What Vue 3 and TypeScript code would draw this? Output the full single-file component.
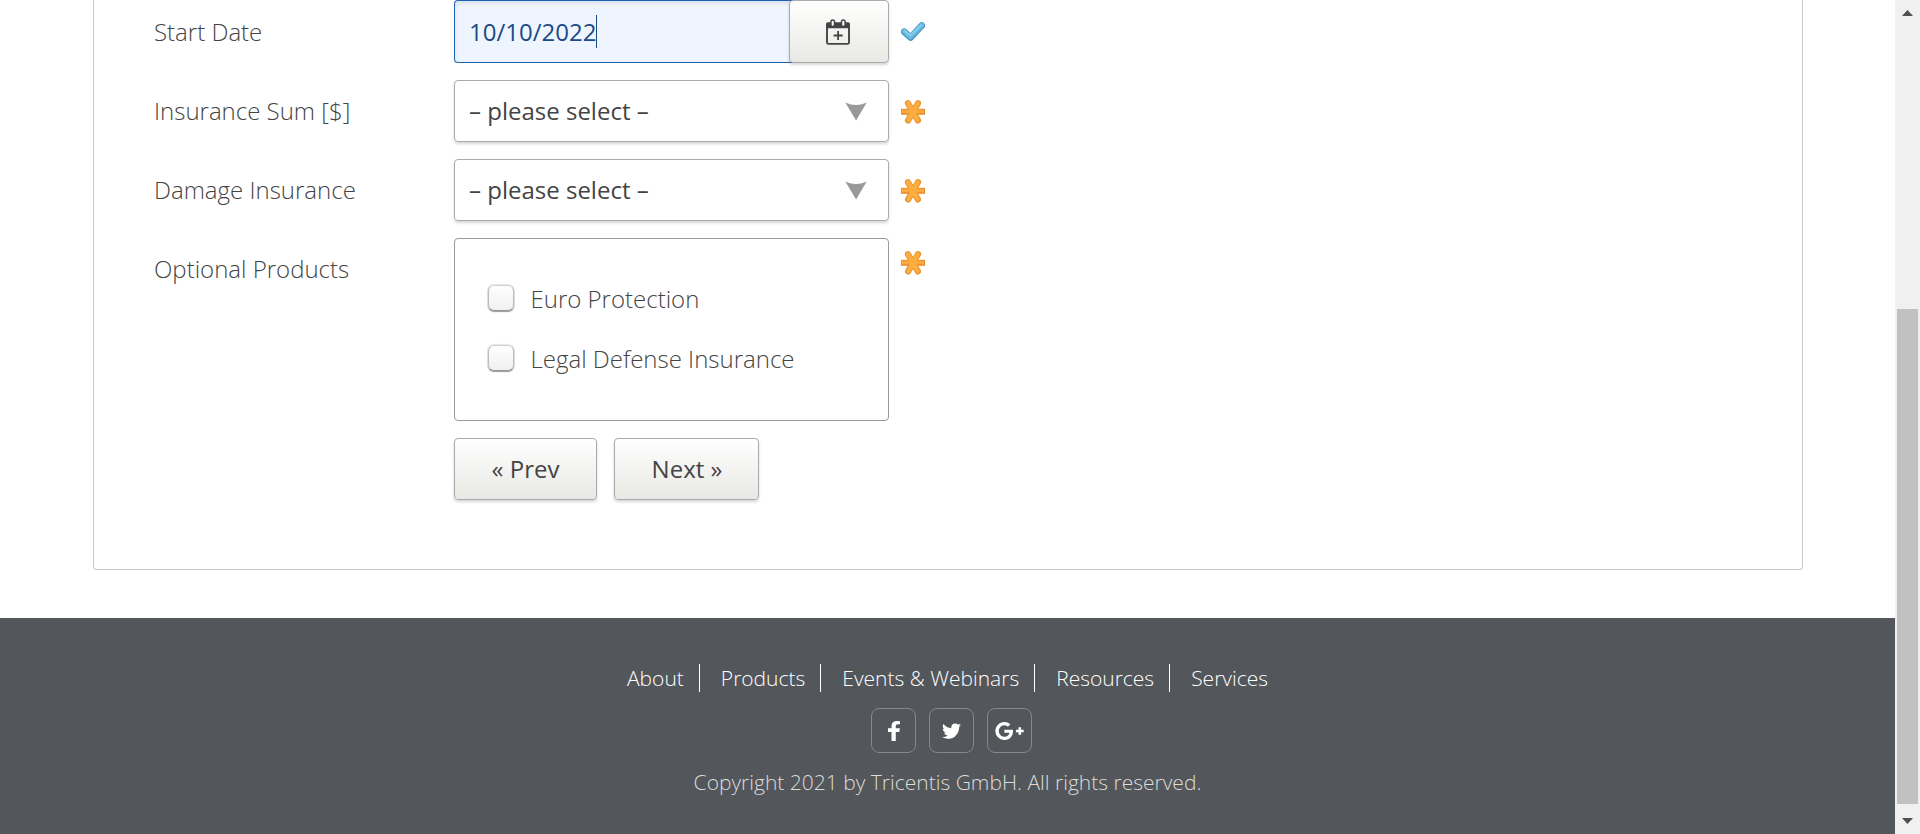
<script setup lang="ts">
import { ref } from 'vue'

interface SelectField {
  id: string
  label: string
}

const startDate = ref('10/10/2022')
const selects: SelectField[] = [
  { id: 'insurancesum', label: 'Insurance Sum [$]' },
  { id: 'damageinsurance', label: 'Damage Insurance' },
]
const products: string[] = ['Euro Protection', 'Legal Defense Insurance']
const links: string[] = ['About', 'Products', 'Events & Webinars', 'Resources', 'Services']
</script>

<template>
  <div class="window">
    <div class="page">
      <main class="panel">
        <svg class="defs" width="0" height="0">
          <defs>
            <symbol id="star" viewBox="0 0 24 24">
              <path d="M0 11.8H24" stroke="#e58c28" stroke-width="6" />
              <path d="M7 3.3L16.9 20.4M17 3.3L7.1 20.4" stroke="#ea942d" stroke-width="6.2" stroke-linecap="round" />
              <path d="M0.5 11.5H23" stroke="#fba93c" stroke-width="3.6" />
              <path d="M7.2 3.4L16.4 19.8M16.7 3.4L7.6 19.8" stroke="#fdae42" stroke-width="4.2" stroke-linecap="round" />
            </symbol>
          </defs>
        </svg>

        <div class="row row-first">
          <label class="label">Start Date</label>
          <div class="date">
            <div class="date-input">{{ startDate }}<span class="caret"></span></div>
            <button class="date-button" type="button">
              <svg width="24" height="26" viewBox="0 0 24 26">
                <path d="M1 9V23.4Q1 24.9 2.5 24.9H21.5Q23 24.9 23 23.4V9" fill="none" stroke="#444" stroke-width="1.9" />
                <path d="M0 9.2V5Q0 3.2 1.8 3.2H22.2Q24 3.2 24 5V9.2Z" fill="#444" />
                <rect x="4.9" y="0.9" width="3.6" height="6.6" rx="1.8" fill="#fff" stroke="#444" stroke-width="1.5" />
                <rect x="15.5" y="0.9" width="3.6" height="6.6" rx="1.8" fill="#fff" stroke="#444" stroke-width="1.5" />
                <path d="M7.6 16.5H16.6M12.1 12V21" stroke="#444" stroke-width="1.8" />
              </svg>
            </button>
          </div>
          <svg class="mark" width="24" height="20" viewBox="0 0 24 20">
            <path d="M3.2 9.8L9.6 15.6L20.8 3.6" fill="none" stroke="#4795bf" stroke-width="6.6" stroke-linecap="round" stroke-linejoin="round" />
            <path d="M3.3 9.5L9.5 14.9L20.7 3.3" fill="none" stroke="#68bbe0" stroke-width="4.8" stroke-linecap="round" stroke-linejoin="round" />
            <path d="M3.3 8.8L9.4 13.6L20.4 2.9" fill="none" stroke="#8ad0ec" stroke-width="1.8" stroke-linecap="round" />
          </svg>
        </div>

        <div v-for="field in selects" :key="field.id" class="row">
          <label class="label">{{ field.label }}</label>
          <div class="select">
            <span>– please select –</span>
            <svg width="22" height="19" viewBox="0 0 22 19">
              <path d="M0.3 0.4Q11 5.4 21.7 0.4L11.1 18.6Z" fill="#999" />
            </svg>
          </div>
          <svg class="mark mark-star" width="24" height="24"><use href="#star" /></svg>
        </div>

        <div class="row row-products">
          <label class="label">Optional Products</label>
          <div class="group">
            <div v-for="product in products" :key="product" class="option">
              <span class="box"></span>
              <span>{{ product }}</span>
            </div>
          </div>
          <svg class="mark mark-top" width="24" height="24"><use href="#star" /></svg>
        </div>

        <div class="actions">
          <button type="button" class="button prev">« Prev</button>
          <button type="button" class="button next">Next »</button>
        </div>
      </main>

      <footer class="footer">
        <nav class="links">
          <a v-for="link in links" :key="link">{{ link }}</a>
        </nav>
        <div class="social">
          <a><svg width="12" height="20" viewBox="479 0 864 1664" preserveAspectRatio="none"><path d="M1343 12v264h-157q-86 0-116 36t-30 108v189h293l-39 296h-254v759h-306v-759h-255v-296h255v-218q0-186 104-288.5t277-102.5q147 0 228 12z" /></svg></a>
          <a><svg width="19" height="16" viewBox="108 240 1576 1296"><path d="M1684 408q-67 98-162 167 1 14 1 42 0 130-38 259.5t-115.5 248.5-184.5 210.5-258 146-323 54.5q-271 0-496-145 35 4 78 4 225 0 401-138-105-2-188-64.5t-114-159.5q33 5 61 5 43 0 85-11-112-23-185.5-111.5t-73.5-205.5v-4q68 38 146 41-66-44-105-115t-39-154q0-88 44-163 121 149 294.5 238.5t371.5 99.5q-8-38-8-74 0-134 94.5-228.5t228.5-94.5q140 0 236 102 109-21 205-78-37 115-142 178 93-10 186-50z" /></svg></a>
          <a><svg width="29" height="18" viewBox="0 163 2304 1466"><path d="M1437 913q0 208-87 370.5t-248 254-369 91.5q-149 0-285-58t-234-156-156-234-58-285 58-285 156-234 234-156 285-58q286 0 491 192l-199 191q-117-113-292-113-123 0-227.5 62t-165.5 168.5-61 232.5 61 232.5 165.5 168.5 227.5 62q83 0 152.5-23t114.5-57.5 78.5-78.5 49-83 21.5-74h-416v-252h692q12 63 12 122zm867-122v210h-209v209h-210v-209h-209v-210h209v-209h210v209h209z" /></svg></a>
        </div>
        <p class="copyright">Copyright 2021 by Tricentis GmbH. All rights reserved.</p>
      </footer>
    </div>

    <div class="scrollbar">
      <svg class="arrow" width="11" height="6" viewBox="0 0 11 6"><path d="M0 6L5.5 0L11 6Z" fill="#505050" /></svg>
      <div class="thumb"></div>
      <svg class="arrow" width="11" height="6" viewBox="0 0 11 6"><path d="M0 0L5.5 6L11 0Z" fill="#505050" /></svg>
    </div>
  </div>
</template>

<style>
body {
  margin: 0;
  overflow: hidden;
}
</style>

<style scoped>
.window {
  display: flex;
  width: 1920px;
  height: 834px;
  overflow: hidden;
  background: #fff;
  color: #444;
  font-family: "Open Sans", sans-serif;
  font-size: 24px;
  font-weight: 300;
}
.page {
  width: 1895px;
  display: flex;
  flex-direction: column;
}
.window * {
  box-sizing: border-box;
}
.panel {
  height: 570px;
  width: 1710px;
  margin-left: 93px;
  padding-left: 60px;
  border: 1px solid #c8c8c8;
  border-top: 0;
  border-radius: 0 0 4px 4px;
}
.defs {
  position: absolute;
}
.row {
  display: grid;
  grid-template-columns: 300px 435px 36px;
  align-items: center;
  height: 62px;
  margin-bottom: 17px;
}
.row-first {
  height: 63px;
}
.label {
  line-height: 62px;
  white-space: nowrap;
}
.mark {
  display: block;
  margin-left: 12px;
}
.mark-star {
  margin-top: 1px;
}
.date {
  display: flex;
  height: 63px;
}
.date-input {
  display: flex;
  align-items: center;
  width: 339px;
  margin-right: -4px;
  padding-left: 14px;
  border: 1px solid #1b62b5;
  border-right: 0;
  border-radius: 4px 0 0 4px;
  background: #eef5fe;
  box-shadow: inset 0 2px 4px rgba(0, 0, 0, 0.1);
  color: #1c4a86;
  font-weight: 400;
}
.caret {
  width: 1px;
  height: 33px;
  background: #1c4a86;
}
.date-button,
.button {
  border: 1px solid #aaa;
  border-radius: 4px;
  background: linear-gradient(#fff, #e8e8e4);
  box-shadow: 0 2px 3px rgba(0, 0, 0, 0.16);
  color: #444;
  font: 400 24px "Open Sans", sans-serif;
  padding: 0;
}
.date-button {
  width: 100px;
  display: flex;
  justify-content: center;
  align-items: center;
  padding-right: 2px;
}
.select {
  display: flex;
  align-items: center;
  justify-content: space-between;
  height: 62px;
  padding: 0 21px 0 14px;
  border: 1px solid #aaa;
  border-radius: 4px;
  box-shadow: 0 2px 3px rgba(0, 0, 0, 0.16);
  font-weight: 400;
}
.select span {
  padding-bottom: 2px;
}
.row-products {
  height: 183px;
  align-items: start;
}
.group {
  display: flex;
  flex-direction: column;
  gap: 16px;
  height: 183px;
  padding: 37px 0 0 33px;
  border: 1px solid #999;
  border-radius: 4px;
}
.option {
  display: flex;
  align-items: center;
  gap: 16.5px;
  height: 44px;
}
.box {
  width: 26px;
  height: 26px;
  border: 1px solid #bbb;
  border-top-color: #d0d0d0;
  border-bottom-color: #999;
  border-radius: 6px;
  background: linear-gradient(#fff, #f0f0f0);
  box-shadow: 0 1px 1px 0 rgba(0, 0, 0, 0.35), 0 0 1px 1px rgba(0, 0, 0, 0.1);
}
.mark-top {
  margin-top: 13px;
}
.actions {
  display: flex;
  gap: 17px;
  margin-left: 300px;
}
.button {
  height: 62px;
  padding-bottom: 2px;
}
.prev {
  width: 143px;
}
.next {
  width: 145px;
  padding-left: 1px;
}
.footer {
  flex: 1;
  display: flex;
  flex-direction: column;
  align-items: center;
  margin-top: 48px;
  padding-top: 46px;
  background: #53565b;
  color: #fff;
  font-size: 21px;
}
.links {
  display: flex;
  gap: 21px;
}
.links a {
  height: 28px;
  line-height: 29px;
  padding-right: 15px;
  border-right: 1px solid #fff;
  white-space: nowrap;
}
.links a:last-child {
  padding-right: 0;
  border-right: 0;
}
.social {
  display: flex;
  gap: 13px;
  margin: 16px 0 0 8px;
}
.social a {
  width: 45px;
  height: 45px;
  display: flex;
  align-items: center;
  justify-content: center;
  border: 1px solid #85878a;
  border-radius: 8px;
}
.social svg {
  fill: #fff;
}
.copyright {
  margin: 15px 0 0;
  line-height: 29px;
  color: #dcdcd8;
}
.scrollbar {
  display: flex;
  flex-direction: column;
  align-items: center;
  justify-content: space-between;
  width: 25px;
  padding: 10px 0;
  background: #f0f0f0;
}
.thumb {
  width: 21px;
  height: 495px;
  margin-top: 279px;
  background: #c1c1c1;
}
</style>
